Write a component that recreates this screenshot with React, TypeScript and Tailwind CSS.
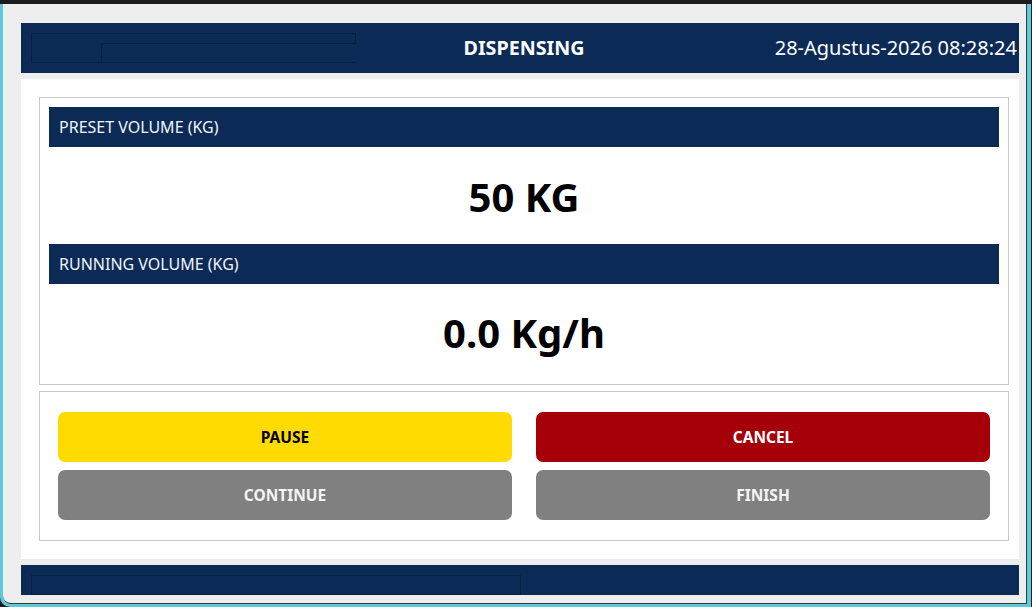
import * as React from "react"

const font = { fontFamily: '"Noto Sans", "Open Sans", sans-serif' }

function Bar({label}: {label: string}) {
    return (
        <div className="h-[40px] bg-[#0b2a55] flex items-center pl-[10px] text-[16px] text-[#f2f4f8]">
            {label}
        </div>
    )
}

function Btn({label, className}: {label: string, className: string}) {
    return (
        <button className={`h-[50px] rounded-[7px] flex items-center justify-center pt-[2px] text-[15.5px] font-bold ${className}`}>
            {label}
        </button>
    )
}

export default function App() {
    return (
        <div className="w-[1032px] h-[607px] bg-[#1c1c1c] flex flex-col pr-[1px] overflow-hidden" style={font}>
            <div className="h-[4px] shrink-0"/>
            {/* window frame */}
            <div className="flex-1 bg-[#5cc9dc] pl-[3px] pr-[4px] pb-[3px] rounded-bl-[10px] flex">
                <div className="flex-1 bg-[#eeeeee] border-r border-b border-[#3a3a3a] rounded-bl-[8px] pl-[18px] pr-[7px] pt-[19px] flex flex-col">
                    {/* header */}
                    <div className="h-[50px] bg-[#0b2a55] grid grid-cols-3 items-center">
                        <div className="pl-[10px]">
                            <div className="w-[325px] flex flex-col">
                                <div className="h-[10px] border-t border-x border-[#06203f]"/>
                                <div className="h-[20px] flex">
                                    <div className="w-[70px] border-l border-b border-[#06203f]"/>
                                    <div className="flex-1 border-l border-t border-b border-[#06203f]"/>
                                </div>
                            </div>
                        </div>
                        <div className="text-center text-white font-bold text-[19.7px] pl-[8px]">DISPENSING</div>
                        <div className="text-right text-white text-[20px] pr-[2px]">28-Agustus-2026 08:28:24</div>
                    </div>

                    {/* content */}
                    <div className="mt-[6px] h-[480px] bg-white pl-[18px] pr-[10px] pt-[18px] flex flex-col gap-[6px]">
                        <div className="h-[288px] border border-[#c8c8c8] p-[9px] flex flex-col">
                            <Bar label="PRESET VOLUME (KG)"/>
                            <div className="h-[97px] flex items-center justify-center pt-[2px] text-[40px] font-bold text-black leading-none">
                                50 KG
                            </div>
                            <Bar label="RUNNING VOLUME (KG)"/>
                            <div className="flex-1 flex items-center justify-center pt-[7px] text-[40px] font-bold text-black leading-none">
                                0.0 Kg/h
                            </div>
                        </div>
                        <div className="h-[150px] border border-[#c8c8c8] px-[18px] pt-[20px] grid grid-cols-2 gap-x-[24px] gap-y-[8px] content-start">
                            <Btn label="PAUSE" className="bg-[#ffdb00] text-black"/>
                            <Btn label="CANCEL" className="bg-[#a50009] text-white"/>
                            <Btn label="CONTINUE" className="bg-[#808080] text-[#f4f4f4]"/>
                            <Btn label="FINISH" className="bg-[#808080] text-[#f4f4f4]"/>
                        </div>
                    </div>

                    {/* footer */}
                    <div className="mt-[6px] h-[30px] bg-[#0b2a55] pl-[10px] pt-[10px]">
                        <div className="w-[490px] h-[20px] border border-[#06203f]"/>
                    </div>
                </div>
            </div>
        </div>
    )
}
